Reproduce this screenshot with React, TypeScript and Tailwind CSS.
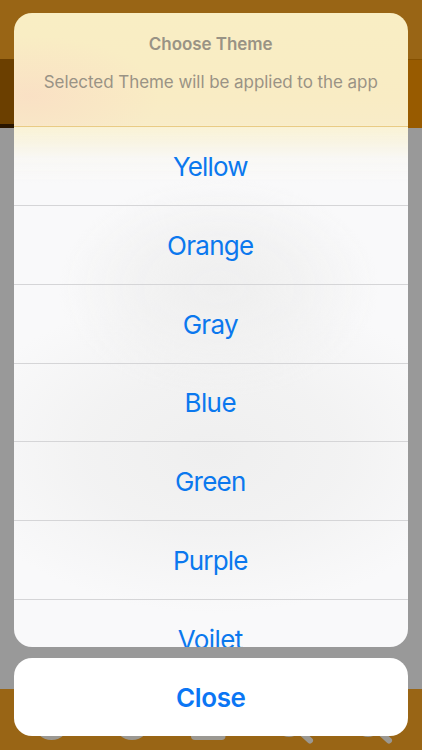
import React from "react";

type Theme = {
  name: string;
  style: string;
};

export default function ThemeSheet() {
  const themes: Theme[] = [
    { name: "Yellow", style: "h-[79px] tracking-[-0.85px]" },
    { name: "Orange", style: "h-[79px] tracking-[-0.7px]" },
    { name: "Gray", style: "h-[79px] tracking-[-0.7px]" },
    { name: "Blue", style: "h-[78px] tracking-[-0.6px]" },
    { name: "Green", style: "h-[79px] tracking-[-0.75px]" },
    { name: "Purple", style: "h-[79px] tracking-[-0.8px]" },
    { name: "Voilet", style: "h-[79px] tracking-[-0.6px]" },
  ];

  return (
    <div className="relative h-[750px] w-[422px] overflow-hidden font-['Inter','Liberation_Sans',sans-serif]">
      {/* Dimmed app screen */}
      <div className="flex h-full flex-col bg-[#999999]">
        <div className="h-[59px] bg-[#996515]" />
        <div className="flex h-[69px]">
          <div className="flex-1 border-b-4 border-[#291500] bg-[#6b3f00]" />
          <div className="flex-1 border-t border-[#855000] bg-[#985b00]" />
        </div>
        <div className="flex-1" />
        <div className="h-[61px] bg-[#996515]">
          <svg viewBox="0 0 422 61" className="h-full w-full" fill="none">
            <circle cx="51.5" cy="33" r="18" fill="#9b9892" />
            <circle cx="132" cy="33" r="18" fill="#9b9892" />
            <rect x="191" y="20" width="34.5" height="31" rx="4" fill="#9b9892" />
            <g stroke="#9b9892" strokeLinecap="round">
              <circle cx="289" cy="34.5" r="11.5" strokeWidth="4" />
              <path d="M299 41.5l11 10" strokeWidth="6" />
              <circle cx="368" cy="34.5" r="11.5" strokeWidth="4" />
              <path d="M378 41.5l11 10" strokeWidth="6" />
            </g>
          </svg>
        </div>
      </div>

      {/* Action sheet */}
      <div className="absolute inset-0 flex flex-col gap-[11px] pt-[13px] pr-[14px] pl-[13.5px]">
        <div className="h-[634px] overflow-hidden rounded-[18px] bg-[#f9f9fa] bg-[linear-gradient(180deg,#f9eec4_0px,#f9ecc4_85px,#f8ecc8_112px,#f9f2d5_114px,#f9f4dfdd_128px,#f9f7f088_145px,transparent_170px),radial-gradient(ellipse_160px_110px_at_205px_275px,#efefef_0%,#f0f0f0bb_50%,transparent_100%),radial-gradient(ellipse_260px_160px_at_200px_440px,#efefef_0%,#f0f0f0bb_50%,transparent_100%)]">
          <div className="flex h-[114px] flex-col items-center border-b border-[#e9cb84] bg-[radial-gradient(ellipse_130px_60px_at_15px_83px,#fadbc5aa,#fadbc555_50%,transparent)] pt-[18.5px] text-[17px] leading-6 text-[#999385]">
            <h1 className="font-semibold tracking-[-0.05px]">Choose Theme</h1>
            <p className="mt-[14px] whitespace-nowrap tracking-[-0.06px]">
              Selected Theme will be applied to the app
            </p>
          </div>
          {themes.map((theme) => (
            <button
              key={theme.name}
              className={
                "flex w-full items-center justify-center border-b border-[#d5d5d7] pr-px text-[26px] text-[#0b78ee] " +
                theme.style
              }
            >
              {theme.name}
            </button>
          ))}
        </div>
        <button className="h-[78px] rounded-[18px] bg-white text-[26px] font-semibold tracking-[-0.35px] text-[#0b76f4]">
          Close
        </button>
      </div>
    </div>
  );
}
